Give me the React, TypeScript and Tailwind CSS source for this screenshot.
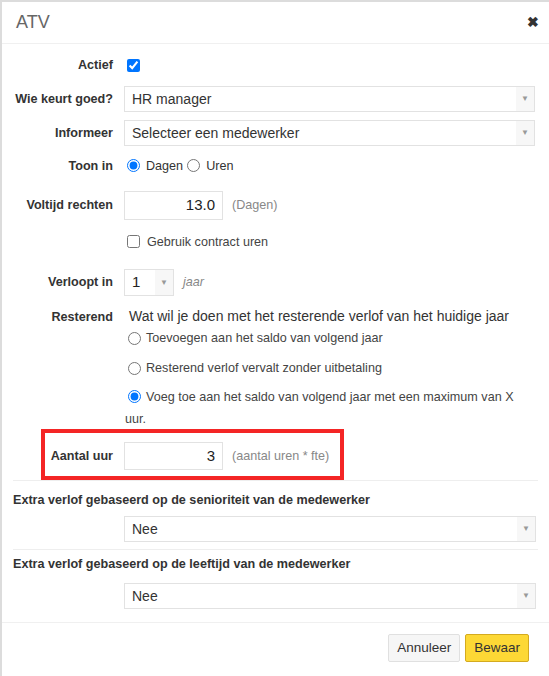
import React from 'react'

const font = { fontFamily: '"Liberation Sans", Arial, sans-serif' }

function Select({ value, className = '' }: { value: string; className?: string }) {
  return (
    <div className={`flex h-[26px] items-stretch border border-[#e2e2e2] bg-white ${className}`}>
      <span className="flex flex-1 items-center pl-[7px] text-[14px] text-[#333]">{value}</span>
      <span className="flex w-[18px] items-center justify-center bg-[#f7f7f7] text-[8px] text-[#999]">▼</span>
    </div>
  )
}

function Row({ label, children, className = '' }: { label: string; children: React.ReactNode; className?: string }) {
  return (
    <div className={`flex items-center ${className}`}>
      <div className="w-[100px] shrink-0 whitespace-nowrap text-right text-[12.6px] font-bold text-[#333]">{label}</div>
      <div className="ml-[11px] flex flex-1 items-center">{children}</div>
    </div>
  )
}

export default function App() {
  return (
    <div style={font} className="h-[676px] w-[549px] overflow-hidden border-l-2 border-t-2 border-[#dcdcdc] bg-white text-[#333]">
      <div className="flex h-[42px] items-center justify-between border-b border-[#f0f0f0] pl-[14px] pr-[10px]">
        <span className="text-[18px] text-[#666]">ATV</span>
        <span className="text-[14px] font-bold text-[#333]">✖</span>
      </div>

      <div className="px-[11px]">
        <Row label="Actief" className="mt-[11px] h-[20px]">
          <input type="checkbox" defaultChecked className="ml-[3px] h-[13px] w-[13px]" />
        </Row>

        <Row label="Wie keurt goed?" className="mt-[11px]">
          <Select value="HR manager" className="w-[411px]" />
        </Row>

        <Row label="Informeer" className="mt-[8px]">
          <Select value="Selecteer een medewerker" className="w-[411px]" />
        </Row>

        <Row label="Toon in" className="mt-[10px] h-[20px]">
          <label className="flex items-center text-[12.6px] text-[#333]">
            <input type="radio" name="toon" defaultChecked className="ml-[3px] mr-[6px] h-[13px] w-[13px]" />
            Dagen
          </label>
          <label className="ml-[4px] flex items-center text-[12.6px] text-[#333]">
            <input type="radio" name="toon" className="mr-[6px] h-[13px] w-[13px]" />
            Uren
          </label>
        </Row>

        <Row label="Voltijd rechten" className="mt-[15px]">
          <div className="flex h-[29px] w-[99px] items-center justify-end border border-[#e2e2e2] pr-[7px] text-[15px] text-[#222]">13.0</div>
          <span className="ml-[9px] text-[12.6px] text-[#888]">(Dagen)</span>
        </Row>

        <Row label="" className="mt-[12px] h-[20px]">
          <label className="flex items-center text-[12.6px] text-[#444]">
            <input type="checkbox" className="ml-[3px] mr-[7px] h-[13px] w-[13px]" />
            Gebruik contract uren
          </label>
        </Row>

        <Row label="Verloopt in" className="mt-[17px]">
          <div className="flex h-[27px] w-[50px] items-stretch border border-[#e2e2e2]">
            <span className="flex flex-1 items-center pl-[7px] text-[15px] text-[#222]">1</span>
            <span className="flex w-[18px] items-center justify-center bg-[#f7f7f7] text-[8px] text-[#999]">▼</span>
          </div>
          <span className="ml-[9px] text-[12.6px] italic text-[#888]">jaar</span>
        </Row>

        <div className="mt-[10px] flex">
          <div className="w-[100px] shrink-0 pt-[2px] text-right text-[12.6px] font-bold text-[#333]">Resterend</div>
          <div className="ml-[16px] flex flex-1 flex-col">
            <div className="text-[14px] leading-[20px] text-[#333]">Wat wil je doen met het resterende verlof van het huidige jaar</div>
            <div className="-ml-[4px] mt-[2px] flex flex-col text-[12.6px] text-[#444]">
              <label className="flex h-[20px] items-center">
                <input type="radio" name="rest" className="ml-[3px] mr-[5px] h-[13px] w-[13px]" />
                Toevoegen aan het saldo van volgend jaar
              </label>
              <label className="mt-[10px] flex h-[20px] items-center">
                <input type="radio" name="rest" className="ml-[3px] mr-[5px] h-[13px] w-[13px]" />
                Resterend verlof vervalt zonder uitbetaling
              </label>
              <label className="mt-[8px] block leading-[22px]">
                <input type="radio" name="rest" defaultChecked className="relative top-[2px] ml-[3px] mr-[5px] h-[13px] w-[13px]" />
                Voeg toe aan het saldo van volgend jaar met een maximum van X uur.
              </label>
            </div>
          </div>
        </div>

        <div className="relative mt-[6px] pb-[4px]">
          <Row label="Aantal uur" className="h-[40px]">
            <div className="flex h-[28px] w-[99px] items-center justify-end border border-[#e2e2e2] pr-[7px] text-[15px] text-[#222]">3</div>
            <span className="ml-[9px] text-[12.6px] text-[#888]">(aantal uren * fte)</span>
          </Row>
          <div className="absolute left-[28px] top-[-7px] h-[51px] w-[303px] border-[4px] border-[#f42525]"></div>
        </div>

        <div className="border-t border-[#eeeeee] pt-[11px]">
          <div className="text-[12.6px] font-bold leading-[16px] text-[#333]">Extra verlof gebaseerd op de senioriteit van de medewerker</div>
          <Select value="Nee" className="ml-[111px] mt-[8px] w-[412px]" />
        </div>

        <div className="mt-[7px] border-t border-[#eeeeee] pt-[6px]">
          <div className="text-[12.6px] font-bold leading-[16px] text-[#333]">Extra verlof gebaseerd op de leeftijd van de medewerker</div>
          <Select value="Nee" className="ml-[111px] mt-[11px] w-[412px]" />
        </div>
      </div>

      <div className="mt-[13px] flex justify-end gap-[5px] border-t border-[#f0f0f0] pr-[20px] pt-[11px]">
        <button className="h-[28px] rounded-[2px] border border-[#e0e0e0] bg-[#f6f6f6] px-[8px] text-[13.5px] text-[#333]">Annuleer</button>
        <button className="h-[28px] rounded-[2px] border border-[#d4aa1f] bg-[#fdd835] px-[8px] text-[13.5px] text-[#333]">Bewaar</button>
      </div>
    </div>
  )
}
